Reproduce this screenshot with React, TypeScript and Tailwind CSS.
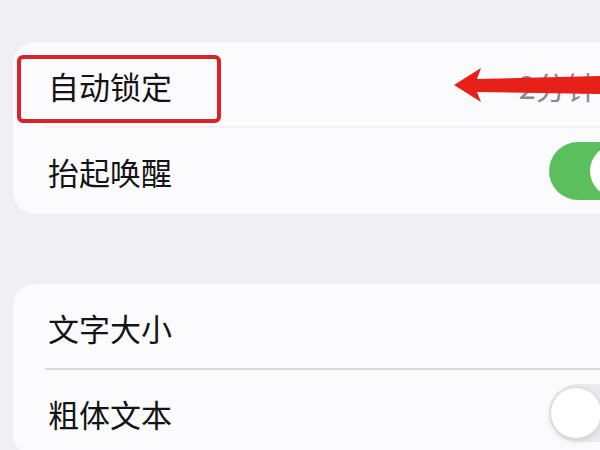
import React from 'react';

const font = { fontFamily: '"Noto Sans CJK SC", "Noto Sans", sans-serif' };

const Toggle: React.FC<{ on: boolean }> = ({ on }) => (
  <div
    className={`relative w-[96px] h-[58px] rounded-full shrink-0 ${on ? 'bg-[#5cbf5e]' : 'bg-[#ebebef]'}`}
  >
    <div
      className={`absolute top-[3px] w-[52px] h-[52px] rounded-full bg-white ${
        on ? 'left-[41px]' : 'left-[1px] border border-[#dcdce0] shadow-[0_2px_6px_rgba(0,0,0,0.12)]'
      }`}
    />
  </div>
);

const Row: React.FC<{ label: string; right?: React.ReactNode; divider?: boolean; dividerColor?: string }> = ({
  label,
  right,
  divider,
  dividerColor = 'bg-[#d9d9dd]',
}) => (
  <div className="relative h-[86px] flex items-center pl-[35px]">
    <span className="text-[31px] text-[#141414] leading-none">{label}</span>
    <div className="ml-auto">{right}</div>
    {divider && <div className={`absolute left-[32px] right-0 bottom-0 h-[2px] ${dividerColor}`} />}
  </div>
);

export default function App() {
  return (
    <div className="relative w-[600px] h-[450px] overflow-hidden bg-[#f0f0f4] pt-[42px] pl-[13px]" style={font}>
      {/* first group */}
      <div className="w-[700px] bg-[#fbfbfd] rounded-[22px]">
        <Row
          label="自动锁定"
          divider
          dividerColor="bg-[#f1f1f4]"
          right={
            <div className="flex items-center mr-[94px] text-[31px] text-[#8a8a8e] leading-none">
              <span>2分钟</span>
              <span className="ml-3">›</span>
            </div>
          }
        />
        <Row label="抬起唤醒" right={<div className="mr-[68px]"><Toggle on /></div>} />
      </div>

      {/* second group */}
      <div className="mt-[70px] w-[700px] bg-[#fbfbfd] rounded-[22px]">
        <Row label="文字大小" divider />
        <Row label="粗体文本" right={<div className="mr-[68px]"><Toggle on={false} /></div>} />
      </div>

      {/* annotation: red box */}
      <div className="absolute left-[17px] top-[55px] w-[204px] h-[68px] border-[4px] border-[#d8232a] rounded-[6px]" />

      {/* annotation: red arrow */}
      <svg className="absolute left-[450px] top-[64px]" width="150" height="42" viewBox="0 0 150 42">
        <path
          d="M4 21 L31 4 L27 15 L150 12 L150 30 L27 28 L31 38 Z"
          fill="#e8201a"
        />
      </svg>
    </div>
  );
}
